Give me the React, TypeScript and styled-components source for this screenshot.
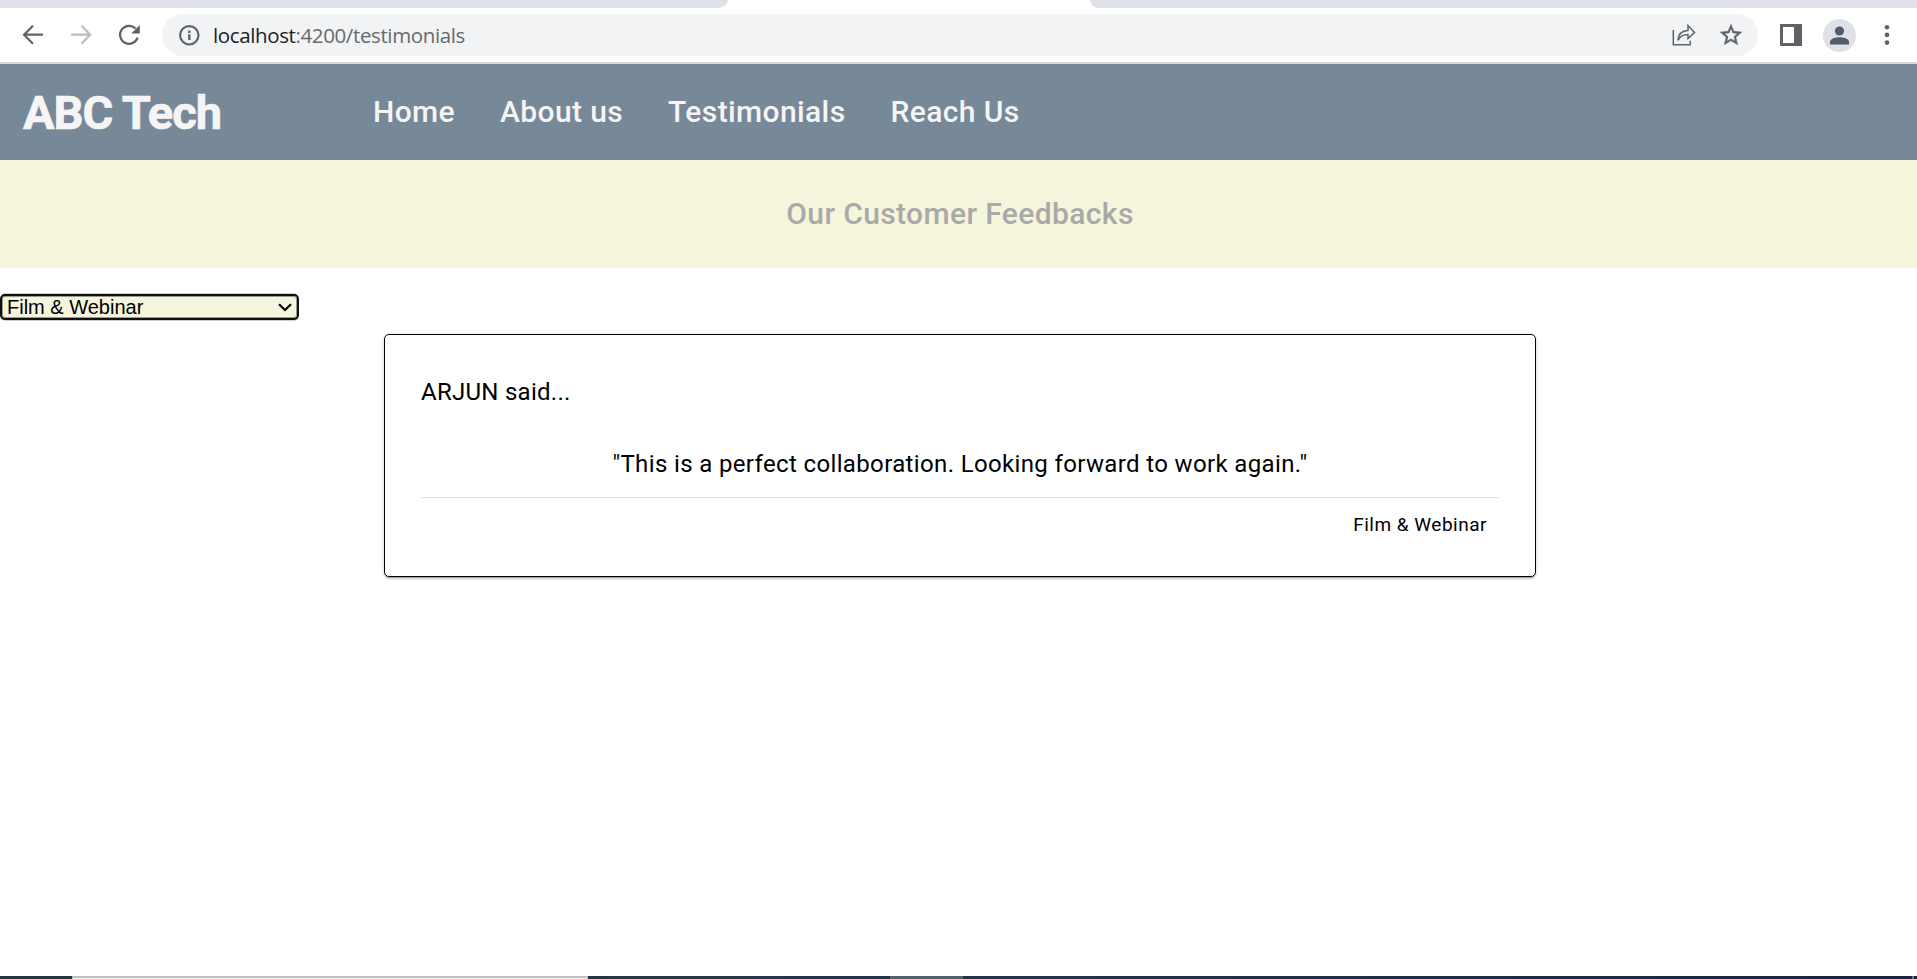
import React from "react";
import styled, { createGlobalStyle } from "styled-components";

const GlobalStyle = createGlobalStyle`
  *, *::before, *::after { box-sizing: border-box; }
  html, body { margin: 0; padding: 0; background: #fff; overflow: hidden; }
  body { font-family: Roboto, sans-serif; color: #000; }
`;

const Screen = styled.div`
  width: 100%;
  height: 979px;
  display: flex;
  flex-direction: column;
`;

const TabStrip = styled.div`
  flex: none;
  height: 8px;
  display: flex;
  justify-content: space-between;
`;

const InactiveTabs = styled.div<{ $width: number; $side: "left" | "right" }>`
  width: ${(p) => p.$width}px;
  background: #dee1e6;
  border-radius: ${(p) => (p.$side === "left" ? "0 0 10px 0 / 0 0 8px 0" : "0 0 0 10px / 0 0 0 8px")};
`;

const Toolbar = styled.div`
  flex: none;
  height: 56px;
  display: flex;
  align-items: center;
  padding: 0 0 0 15px;
  border-bottom: 2px solid #d9dad9;
  background: #fff;
`;

const ToolButton = styled.button<{ $width: number }>`
  width: ${(p) => p.$width}px;
  height: 42px;
  flex: none;
  display: flex;
  align-items: center;
  justify-content: center;
  padding: 0;
  border: 0;
  background: none;
`;

const AddressBar = styled.div`
  flex: 1;
  height: 42px;
  margin-left: 15px;
  padding: 0 7px 0 14px;
  display: flex;
  align-items: center;
  border-radius: 21px;
  background: #f1f3f4;
`;

const Url = styled.div`
  flex: 1;
  margin: 0 0 1px 11px;
  font: 20.5px/28px "Open Sans", "Noto Sans", sans-serif;
  letter-spacing: -0.38px;
  color: #666a6e;
`;

const Host = styled.span`
  color: #202124;
`;

const Avatar = styled.div`
  width: 33px;
  height: 33px;
  border-radius: 50%;
  display: flex;
  align-items: center;
  justify-content: center;
  background: #dee1e6;
`;

const Navbar = styled.header`
  flex: none;
  height: 96px;
  display: flex;
  align-items: center;
  padding-left: 23px;
  background: #778899;
  color: #f5f5f5;
`;

const Brand = styled.h1`
  width: 350px;
  margin: 2px 0 0;
  font-size: 47px;
  line-height: 56px;
  font-weight: 700;
  letter-spacing: -1px;
  -webkit-text-stroke: 0.7px #f5f5f5;
`;

const Nav = styled.nav`
  display: flex;
  gap: 45px;
`;

const NavLink = styled.a`
  font-size: 30px;
  line-height: 40px;
  font-weight: 500;
  letter-spacing: 0.38px;
  color: inherit;
`;

const Banner = styled.section`
  flex: none;
  height: 108px;
  display: flex;
  align-items: center;
  justify-content: center;
  padding-left: 3px;
  background: #f5f5dc;
`;

const BannerTitle = styled.h2`
  margin: 0;
  font-size: 30px;
  line-height: 40px;
  font-weight: 500;
  letter-spacing: 0.38px;
  color: #a9a9a9;
`;

const Content = styled.main`
  flex: 1;
  display: flex;
  flex-direction: column;
  align-items: flex-start;
  padding-top: 26px;
`;

const CategoryPicker = styled.button`
  width: 299px;
  height: 26px;
  display: flex;
  align-items: center;
  justify-content: space-between;
  padding: 0 5px;
  border: 2px solid #101010;
  border-radius: 5px;
  box-shadow: 0 -1px 0 -0.5px #999, 0 1px 0 -0.5px #999, inset 0 0 0 1px #99998f;
  background: #f5f5dc;
  color: #000;
  font: 20px/22px "Liberation Sans", sans-serif;
`;

const Card = styled.article`
  width: 1152px;
  height: 243px;
  margin: 14px auto 0 384px;
  padding: 36px;
  border: 1px solid #000;
  border-radius: 5px;
  box-shadow: 0 3px 1px -2px rgba(0, 0, 0, 0.2), 0 2px 2px rgba(0, 0, 0, 0.14), 0 1px 5px rgba(0, 0, 0, 0.12);
  background: #fff;
`;

const Author = styled.p`
  margin: 3px 0 0;
  font-size: 24px;
  line-height: 36px;
  letter-spacing: 0.27px;
`;

const Quote = styled.p`
  margin: 36px 0 15px;
  font-size: 24px;
  line-height: 36px;
  letter-spacing: 0.36px;
  text-align: center;
`;

const Divider = styled.hr`
  height: 1px;
  margin: 0;
  border: 0;
  background: #dfdfdf;
`;

const Category = styled.p`
  margin: 12px 12px 0 0;
  font-size: 19px;
  line-height: 30px;
  letter-spacing: 0.5px;
  text-align: right;
`;

const Taskbar = styled.footer`
  flex: none;
  height: 3px;
  display: flex;
  background: linear-gradient(90deg, #213840 0, #22364a 50%, #1b2340 100%);
`;

const TaskSearch = styled.div`
  width: 516px;
  margin-left: 72px;
  border: 2px solid #c0c0c0;
  border-bottom: 0;
  border-left-width: 1px;
  border-right-width: 1px;
  background: #f5f5f5;
`;

const ActiveTask = styled.div`
  width: 73px;
  margin-left: 302px;
  background: #53626d;
`;

const ShowDesktop = styled.div`
  width: 2px;
  margin: 0 3px 0 auto;
  background: #6d7487;
`;

const ArrowIcon = ({ color, flip }: { color: string; flip?: boolean }) => (
  <svg width="22" height="22" viewBox="0 0 22 22" fill="none" stroke={color} strokeWidth="2.2">
    <path d={flip ? "M1 10.7H20M11.5 1.7L20.2 10.7L11.5 19.7" : "M21 10.7H2M11 1.7L2 10.7L11 19.7"} />
  </svg>
);

const ReloadIcon = () => (
  <svg width="24" height="24" viewBox="0 0 24 24">
    <path d="M20.6 14.6A9 9 0 1 1 18.5 5.5" fill="none" stroke="#5f6368" strokeWidth="2.2" />
    <path d="M22.8 2V10.6H14.2Z" fill="#5f6368" />
  </svg>
);

const InfoIcon = () => (
  <svg width="26" height="26" viewBox="0 0 26 26">
    <circle cx="13.3" cy="13.3" r="9.2" fill="none" stroke="#5f6368" strokeWidth="2.2" />
    <path d="M12.1 12.2h2.4v5.8h-2.4zM12.1 8.5h2.4v2.4h-2.4z" fill="#5f6368" />
  </svg>
);

const ShareIcon = () => (
  <svg width="26" height="26" viewBox="0 0 26 26" fill="none" stroke="#5f6368" strokeWidth="1.5">
    <path d="M2.3 8V22.8H19.2V18.8" />
    <path d="M7 18.3C7.3 12 10.5 8.7 17 8.4V3.6L23.6 10.4L17 16.6V12.5C12.8 12.4 9.4 14 7 18.3Z" />
  </svg>
);

const StarIcon = () => (
  <svg width="26" height="26" viewBox="0 0 24 24" fill="#5f6368" stroke="#5f6368" strokeWidth="0.4">
    <path d="M22 9.24l-7.19-.62L12 2 9.19 8.63 2 9.24l5.46 4.73L5.82 21 12 17.27 18.18 21l-1.63-7.03L22 9.24zM12 15.4l-3.76 2.27 1-4.28-3.32-2.88 4.38-.38L12 6.1l1.71 4.04 4.38.38-3.32 2.88 1 4.28L12 15.4z" />
  </svg>
);

const SidePanelIcon = () => (
  <svg width="22" height="22" viewBox="0 0 22 22">
    <path fillRule="evenodd" fill="#5f6368" d="M0 0H22V22H0ZM3 3V19H14V3Z" />
  </svg>
);

const PersonIcon = () => (
  <svg width="19" height="19" viewBox="0 0 19 19" fill="#525c6f">
    <circle cx="9.5" cy="5" r="4.6" />
    <path d="M0 18.5V16C0 12.6 5.8 11.2 9.5 11.2S19 12.6 19 16V18.5Z" />
  </svg>
);

const MenuIcon = () => (
  <svg width="6" height="22" viewBox="0 0 6 22" fill="#5f6368">
    <circle cx="3" cy="3.2" r="2.3" />
    <circle cx="3" cy="10.9" r="2.3" />
    <circle cx="3" cy="18.6" r="2.3" />
  </svg>
);

const Chevron = () => (
  <svg width="14" height="9" viewBox="0 0 14 9" fill="none" stroke="#000" strokeWidth="2.2">
    <path d="M1 1.2L7 7L13 1.2" />
  </svg>
);

const navItems = ["Home", "About us", "Testimonials", "Reach Us"];

export default function App() {
  return (
    <Screen>
      <GlobalStyle />
      <TabStrip>
        <InactiveTabs $width={728} $side="left" />
        <InactiveTabs $width={827} $side="right" />
      </TabStrip>
      <Toolbar>
        <ToolButton $width={36} aria-label="Back"><ArrowIcon color="#5f6368" /></ToolButton>
        <ToolButton $width={60} aria-label="Forward"><ArrowIcon color="#bbbcbe" flip /></ToolButton>
        <ToolButton $width={36} aria-label="Reload"><ReloadIcon /></ToolButton>
        <AddressBar>
          <InfoIcon />
          <Url><Host>localhost</Host>:4200/testimonials</Url>
          <ToolButton $width={54} aria-label="Share"><ShareIcon /></ToolButton>
          <ToolButton $width={40} aria-label="Bookmark"><StarIcon /></ToolButton>
        </AddressBar>
        <ToolButton $width={65} aria-label="Side panel"><SidePanelIcon /></ToolButton>
        <Avatar><PersonIcon /></Avatar>
        <ToolButton $width={61} aria-label="Menu"><MenuIcon /></ToolButton>
      </Toolbar>
      <Navbar>
        <Brand>ABC Tech</Brand>
        <Nav>
          {navItems.map((item) => (
            <NavLink key={item}>{item}</NavLink>
          ))}
        </Nav>
      </Navbar>
      <Banner>
        <BannerTitle>Our Customer Feedbacks</BannerTitle>
      </Banner>
      <Content>
        <CategoryPicker>
          Film &amp; Webinar
          <Chevron />
        </CategoryPicker>
        <Card>
          <Author>ARJUN said...</Author>
          <Quote>"This is a perfect collaboration. Looking forward to work again."</Quote>
          <Divider />
          <Category>Film &amp; Webinar</Category>
        </Card>
      </Content>
      <Taskbar>
        <TaskSearch />
        <ActiveTask />
        <ShowDesktop />
      </Taskbar>
    </Screen>
  );
}
